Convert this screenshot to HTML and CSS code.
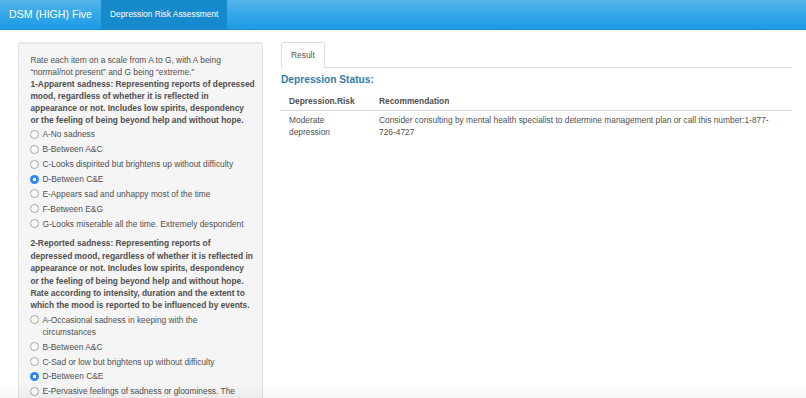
FILE: index.html
```html
<!DOCTYPE html>
<html lang="en">
<head>
<meta charset="utf-8">
<title>DSM (HIGH) Five</title>
<link rel="stylesheet" href="styles.css">
</head>
<body>
<nav class="navbar">
  <span class="brand">DSM (HIGH) Five</span>
  <span class="nav-item active">Depression Risk Assessment</span>
</nav>
<div class="main">
  <aside class="well">
    <div class="form-group">
      <div class="label">
        <p class="intro">Rate each item on a scale from A to G, with A being<br>“normal/not present” and G being “extreme.”</p>
        <p class="question">1-Apparent sadness: Representing reports of depressed<br>mood, regardless of whether it is reflected in<br>appearance or not. Includes low spirits, despondency<br>or the feeling of being beyond help and without hope.</p>
      </div>
      <div class="options">
        <label class="radio"><input type="radio" name="q1"><span>A-No sadness</span></label>
        <label class="radio"><input type="radio" name="q1"><span>B-Between A&amp;C</span></label>
        <label class="radio"><input type="radio" name="q1"><span>C-Looks dispirited but brightens up without difficulty</span></label>
        <label class="radio"><input type="radio" name="q1" checked><span>D-Between C&amp;E</span></label>
        <label class="radio"><input type="radio" name="q1"><span>E-Appears sad and unhappy most of the time</span></label>
        <label class="radio"><input type="radio" name="q1"><span>F-Between E&amp;G</span></label>
        <label class="radio"><input type="radio" name="q1"><span>G-Looks miserable all the time. Extremely despondent</span></label>
      </div>
    </div>
    <div class="form-group">
      <div class="label">
        <p class="question long">2-Reported sadness: Representing reports of<br>depressed mood, regardless of whether it is reflected in<br>appearance or not. Includes low spirits, despondency<br>or the feeling of being beyond help and without hope.<br>Rate according to intensity, duration and the extent to<br>which the mood is reported to be influenced by events.</p>
      </div>
      <div class="options">
        <label class="radio"><input type="radio" name="q2"><span>A-Occasional sadness in keeping with the circumstances</span></label>
        <label class="radio"><input type="radio" name="q2"><span>B-Between A&amp;C</span></label>
        <label class="radio"><input type="radio" name="q2"><span>C-Sad or low but brightens up without difficulty</span></label>
        <label class="radio"><input type="radio" name="q2" checked><span>D-Between C&amp;E</span></label>
        <label class="radio"><input type="radio" name="q2"><span>E-Pervasive feelings of sadness or gloominess. The mood is hardly influenced by external circumstances</span></label>
        <label class="radio"><input type="radio" name="q2"><span>F-Between E&amp;G</span></label>
        <label class="radio"><input type="radio" name="q2"><span>G-Continuous experience of misery or extreme despondency</span></label>
      </div>
    </div>
  </aside>
  <section class="panel">
    <div class="tabs">
      <span class="tab active">Result</span>
    </div>
    <div class="tab-content">
      <h3 class="status">Depression Status:</h3>
      <table class="result">
        <colgroup><col class="col-risk"><col></colgroup>
        <thead>
          <tr><th>Depression.Risk</th><th>Recommendation</th></tr>
        </thead>
        <tbody>
          <tr><td>Moderate depression</td><td>Consider consulting by mental health specialist to determine management plan or call this number:1-877-<br>726-4727</td></tr>
        </tbody>
      </table>
    </div>
  </section>
</div>
<div class="window-shade"></div>
</body>
</html>
```
FILE: styles.css
```css
html, body {
  margin: 0;
  padding: 0;
}
body {
  font-family: "Liberation Sans", Arial, Helvetica, sans-serif;
  font-size: 8.4px;
  line-height: 12px;
  color: #505050;
  background: #fff;
}
p { margin: 0; }

.navbar {
  display: flex;
  height: 29px;
  background: linear-gradient(#54b4eb, #2fa4e7 60%, #1d9ce5);
  border-bottom: 1px solid #178acc;
  margin-bottom: 12px;
}
.brand {
  padding: 0 9px;
  font-size: 10.6px;
  line-height: 29px;
  color: #fff;
}
.nav-item {
  padding: 0 9px;
  font-size: 8.4px;
  line-height: 29px;
  color: #fff;
}
.nav-item.active {
  background: #178acc;
}

.main {
  display: grid;
  grid-template-columns: 245px 1fr;
  column-gap: 18px;
  padding: 0 14px 0 18px;
  align-items: start;
}

.well {
  background: #f5f5f5;
  border: 1px solid #e3e3e3;
  border-radius: 3px;
  box-shadow: inset 0 1px 1px rgba(0, 0, 0, 0.05);
  padding: 11.4px;
}
.form-group + .form-group {
  margin-top: 7.6px;
}
.question {
  font-weight: bold;
  white-space: nowrap;
}
.question.long {
  line-height: 12.4px;
}
.intro {
  white-space: nowrap;
}
.options {
  margin-top: 2px;
  display: flex;
  flex-direction: column;
  gap: 2.9px;
}
.radio {
  display: flex;
  align-items: flex-start;
  padding-left: 12px;
  line-height: 12px;
}
.radio input {
  -webkit-appearance: none;
  appearance: none;
  flex: none;
  width: 9px;
  height: 9px;
  margin: 1.5px 3px 0 -12px;
  border: 1px solid #a4a4a4;
  border-radius: 50%;
  background: #fff;
  box-sizing: border-box;
}
.radio input:checked {
  border: none;
  background: radial-gradient(circle, #fff 0 1.5px, #2f86f2 2px 100%);
}

.panel {
  min-width: 0;
}
.tabs {
  display: flex;
  border-bottom: 1px solid #ddd;
}
.tab {
  margin-bottom: -1px;
  padding: 6px 9px;
  border: 1px solid #ddd;
  border-bottom-color: transparent;
  border-radius: 2.4px 2.4px 0 0;
  background: #fff;
  color: #555;
  line-height: 12px;
}
.status {
  margin: 5px 0 6px;
  font-size: 10.2px;
  line-height: 13px;
  font-weight: bold;
  color: #317eac;
}
.result {
  width: 100%;
  border-collapse: collapse;
  table-layout: fixed;
}
.col-risk {
  width: 90px;
}
.result th {
  text-align: left;
  font-weight: bold;
  padding: 3px 8px 3px;
  border-bottom: 1px solid #d8d8d8;
  line-height: 12px;
}
.result td {
  vertical-align: top;
  padding: 4px 8px;
  line-height: 11.5px;
}

.window-shade {
  position: fixed;
  left: 0;
  right: 0;
  bottom: 0;
  height: 14px;
  pointer-events: none;
  background: linear-gradient(rgba(0, 0, 0, 0), rgba(0, 0, 0, 0.035));
}
```
